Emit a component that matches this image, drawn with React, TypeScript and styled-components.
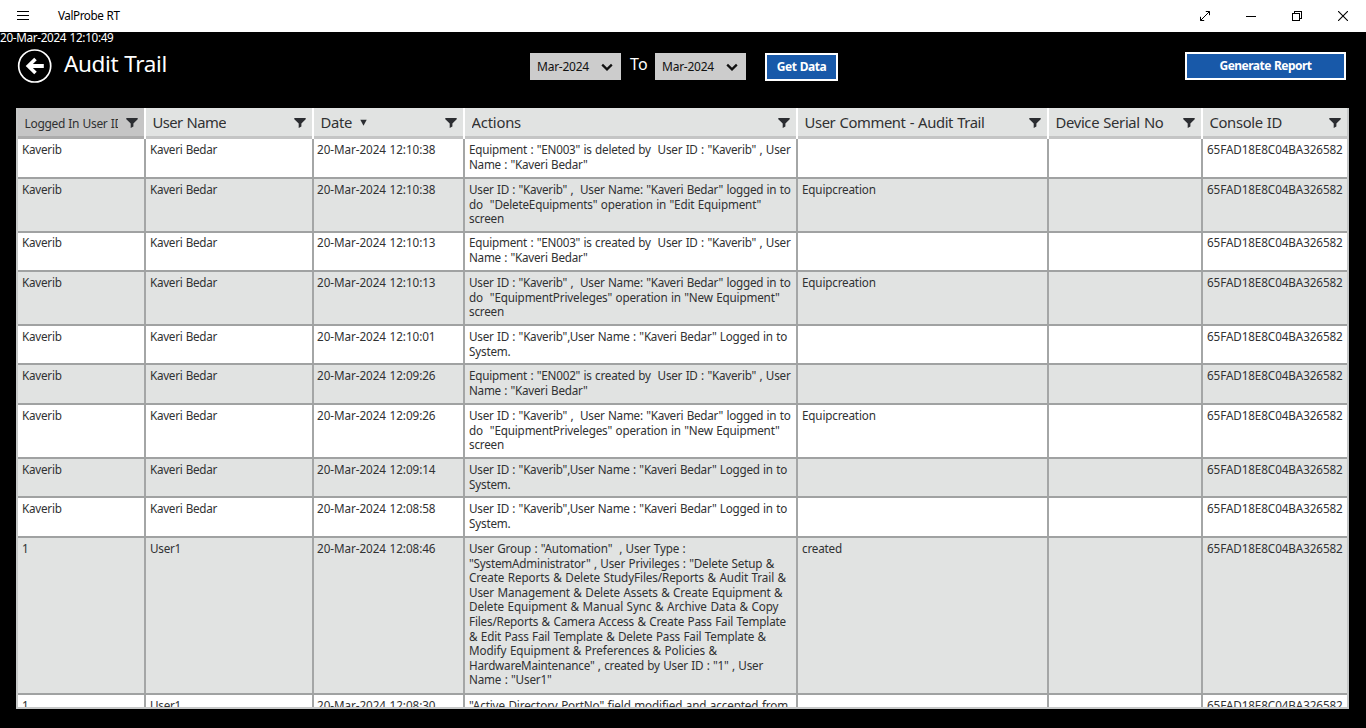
import React, { useLayoutEffect, useRef } from "react";
import styled, { createGlobalStyle } from "styled-components";

const Global = createGlobalStyle`
  * { box-sizing: border-box; }
  body { margin: 0; background: #000; font-family: "Noto Sans", "Open Sans", sans-serif; overflow: hidden; }
`;

/* A single line of text, tracked so that it fills a given advance width. */
const Line = styled.span`
  display: block;
  width: max-content;
  white-space: pre;
  word-spacing: 0.6px;
`;

function Fit({ text, width }: { text: string; width: number }) {
  const ref = useRef<HTMLSpanElement>(null);
  useLayoutEffect(() => {
    const el = ref.current!;
    el.style.letterSpacing = "0px";
    const natural = el.getBoundingClientRect().width;
    el.style.letterSpacing = `${(width - natural) / text.length}px`;
  }, [text, width]);
  return <Line ref={ref}>{text}</Line>;
}

const Page = styled.div`
  width: 1366px;
  height: 728px;
  display: flex;
  flex-direction: column;
  background: #000;
  color: #fff;
  overflow: hidden;
`;

const TitleBar = styled.header`
  height: 32px;
  flex: none;
  display: flex;
  align-items: center;
  background: #fff;
  color: #000;
  padding-left: 17px;
`;

const AppName = styled.div`
  flex: 1;
  margin-left: 29px;
  padding-bottom: 2px;
  font-size: 11.7px;
  line-height: 16px;
`;

const WindowButton = styled.button`
  width: 46px;
  height: 32px;
  border: 0;
  padding: 0;
  background: none;
  display: flex;
  align-items: center;
  justify-content: center;
`;

const Clock = styled.div`
  height: 14px;
  flex: none;
  font-size: 11.7px;
  line-height: 10px;
`;

const Toolbar = styled.div`
  height: 62px;
  flex: none;
  display: flex;
  align-items: flex-start;
  padding-right: 20px;
`;

const BackButton = styled.button`
  width: 36px;
  height: 36px;
  margin: 2px 0 0 17px;
  border: 0;
  padding: 0;
  background: none;
`;

const Heading = styled.h1`
  margin: 2px 0 0 11px;
  width: 466px;
  font-size: 22.5px;
  font-weight: 400;
  line-height: 32px;
`;

const MonthSelect = styled.div`
  width: 91px;
  height: 27px;
  margin-top: 7px;
  padding: 0 8px 0 7px;
  display: flex;
  align-items: center;
  justify-content: space-between;
  background: #ccc;
  color: #111;
  font-size: 12px;
`;

const ToLabel = styled.div`
  width: 34px;
  padding: 6px 0 0 9px;
  font-size: 16px;
  line-height: 24px;
`;

const ActionButton = styled.button<{ $w: number; $top: number; $left: string }>`
  width: ${(p) => p.$w}px;
  height: 28px;
  margin: ${(p) => p.$top}px 0 0 ${(p) => p.$left};
  padding: 0 0 1px;
  display: flex;
  align-items: center;
  justify-content: center;
  border: 2px solid #fff;
  background: #1859a9;
  color: #fff;
  font-family: inherit;
  font-size: 12px;
  font-weight: 700;
`;

const Grid = styled.div`
  width: 1333px;
  height: 601px;
  margin-left: 16px;
  border: 2px solid #c6c8c8;
  border-top: 0;
  overflow: hidden;
  background: #fff;
  color: #303132;
`;

const columns = "128px 168px 151px 333px 251px 154px 144px";

const HeadRow = styled.div`
  display: grid;
  grid-template-columns: ${columns};
  height: 31px;
  background: #e1e3e2;
`;

const HeadCell = styled.div<{ $active?: boolean }>`
  display: flex;
  align-items: center;
  justify-content: space-between;
  padding: 0 6.4px 2px 6.5px;
  border-right: 2px solid #fff;
  box-shadow: inset 0 -3px 0 ${(p) => (p.$active ? "#acacac" : "#c4c5c5")};
  background: ${(p) => (p.$active ? "#c5c5c5" : "#e1e3e2")};
  font-size: 14.8px;
  line-height: 22px;
  &:last-child { border-right: 0; }
`;

const HeadLabel = styled.div<{ $active?: boolean }>`
  display: flex;
  align-items: center;
  gap: 8px;
  overflow: hidden;
  ${(p) => (p.$active ? "width: 93px; font-size: 12px; padding-top: 2px;" : "padding-bottom: 2px;")}
`;

const Row = styled.div<{ $h: number; $alt: boolean }>`
  display: grid;
  grid-template-columns: ${columns};
  height: ${(p) => p.$h}px;
  border-bottom: 2px solid #a0a2a2;
  background: ${(p) => (p.$alt ? "#e1e3e2" : "#fff")};
`;

const Cell = styled.div<{ $tight?: boolean; $raised?: boolean }>`
  padding: ${(p) => (p.$raised ? 2 : 3)}px 0 0 ${(p) => (p.$tight ? 3 : 4)}px;
  border-right: 2px solid #a4a6a6;
  font-size: 11.7px;
  line-height: 14.6px;
  overflow: hidden;
  &:last-child { border-right: 0; }
`;

const FilterIcon = () => (
  <svg width="12" height="10" viewBox="0 0 12 10" fill="#2b2d31">
    <path d="M0.3 0H11.7V1.2L7.4 5.4V8.4L4.7 9.9V5.4L0.3 1.2Z" />
  </svg>
);

const SortIcon = () => (
  <svg width="7" height="7" viewBox="0 0 7 7" fill="#2b2d31" transform="translate(0 1)">
    <path d="M0.3 0.7H6.7L3.5 6.8Z" />
  </svg>
);

const ChevronIcon = () => (
  <svg width="12" height="8" viewBox="0 0 12 8" fill="none" stroke="#111" strokeWidth="2.3">
    <path d="M1.2 1.7L6 6.3L10.8 1.7" />
  </svg>
);

type Text = [string, number];

const heads: Text[] = [
  ["Logged In User ID", 98.5],
  ["User Name", 73.5],
  ["Date", 31.5],
  ["Actions", 49.5],
  ["User Comment - Audit Trail", 180],
  ["Device Serial No", 108],
  ["Console ID", 72.5],
];

const deleted: Text[] = [
  ['Equipment : "EN003" is deleted by  User ID : "Kaverib" , User', 321.5],
  ['Name : "Kaveri Bedar"', 118.5],
];
const created = (id: string): Text[] => [
  [`Equipment : "${id}" is created by  User ID : "Kaverib" , User`, 321.5],
  ['Name : "Kaveri Bedar"', 118.5],
];
const operation = (name: string, screen: string, width: number): Text[] => [
  ['User ID : "Kaverib" ,  User Name: "Kaveri Bedar" logged in to', 321.5],
  [`do  "${name}" operation in "${screen}"`, width],
  ["screen", 35],
];
const login: Text[] = [
  ['User ID : "Kaverib",User Name : "Kaveri Bedar" Logged in to', 318],
  ["System.", 41.5],
];
const newUser: Text[] = [
  ['User Group : "Automation"  , User Type :', 216.5],
  ['"SystemAdministrator" , User Privileges : "Delete Setup &', 305],
  ["Create Reports & Delete StudyFiles/Reports & Audit Trail &", 317],
  ["User Management & Delete Assets & Create Equipment &", 313.5],
  ["Delete Equipment & Manual Sync & Archive Data & Copy", 309.5],
  ["Files/Reports & Camera Access & Create Pass Fail Template", 317],
  ["& Edit Pass Fail Template & Delete Pass Fail Template &", 297],
  ["Modify Equipment & Preferences & Policies &", 248],
  ['HardwareMaintenance" , created by User ID : "1" , User', 294],
  ['Name : "User1"', 82.5],
];

interface Entry {
  h: number;
  id: Text;
  name: Text;
  time: string;
  actions: Text[];
  comment?: Text;
  raised?: boolean;
}

const kaverib: Text = ["Kaverib", 39.7];
const kaveri: Text = ["Kaveri Bedar", 67];
const equip: Text = ["Equipcreation", 73.7];

const entries: Entry[] = [
  { h: 40, id: kaverib, name: kaveri, time: "12:10:38", actions: deleted },
  { h: 54, id: kaverib, name: kaveri, time: "12:10:38", actions: operation("DeleteEquipments", "Edit Equipment", 292), comment: equip },
  { h: 39, id: kaverib, name: kaveri, time: "12:10:13", actions: created("EN003"), raised: true },
  { h: 54, id: kaverib, name: kaveri, time: "12:10:13", actions: operation("EquipmentPriveleges", "New Equipment", 310.5), comment: equip },
  { h: 39, id: kaverib, name: kaveri, time: "12:10:01", actions: login },
  { h: 40, id: kaverib, name: kaveri, time: "12:09:26", actions: created("EN002") },
  { h: 54, id: kaverib, name: kaveri, time: "12:09:26", actions: operation("EquipmentPriveleges", "New Equipment", 310.5), comment: equip },
  { h: 39, id: kaverib, name: kaveri, time: "12:09:14", actions: login },
  { h: 40, id: kaverib, name: kaveri, time: "12:08:58", actions: login },
  { h: 157, id: ["1", 6.5], name: ["User1", 31], time: "12:08:46", actions: newUser, comment: ["created", 40] },
  { h: 40, id: ["1", 6.5], name: ["User1", 31], time: "12:08:30", actions: [['"Active Directory PortNo" field modified and accepted from', 319]] },
];

export default function App() {
  return (
    <Page>
      <Global />
      <TitleBar>
        <svg width="12" height="10" viewBox="0 0 12 10" stroke="#000" shapeRendering="crispEdges">
          <path d="M0 0.5H12M0 4.5H12M0 8.5H12" />
        </svg>
        <AppName><Fit text="ValProbe RT" width={61.5} /></AppName>
        <WindowButton>
          <svg width="12" height="12" viewBox="0 0 12 12" fill="none" stroke="#000">
            <path d="M1.5 10.5L10.5 1.5M6.8 1.5H10.5V5.2M1.5 6.8V10.5H5.2" />
          </svg>
        </WindowButton>
        <WindowButton>
          <svg width="10" height="10" viewBox="0 0 10 10" stroke="#000" shapeRendering="crispEdges">
            <path d="M0 5.5H10" />
          </svg>
        </WindowButton>
        <WindowButton>
          <svg width="10" height="10" viewBox="0 0 10 10" fill="none" stroke="#000" shapeRendering="crispEdges">
            <path d="M0.5 2.5H7.5V9.5H0.5ZM2.5 2.5V0.5H9.5V7.5H7.5" />
          </svg>
        </WindowButton>
        <WindowButton>
          <svg width="10" height="10" viewBox="0 0 10 10" stroke="#000" strokeWidth="1.1">
            <path d="M0 0L10 10M10 0L0 10" />
          </svg>
        </WindowButton>
      </TitleBar>
      <Clock><Fit text="20-Mar-2024 12:10:49" width={113.5} /></Clock>
      <Toolbar>
        <BackButton>
          <svg width="36" height="36" viewBox="0 0 36 36" fill="none" stroke="#fff">
            <circle cx="17.7" cy="18" r="16" strokeWidth="1.7" />
            <path d="M11 18H26.8" strokeWidth="4" />
            <path d="M18.5 11L11.3 18L18.5 25" strokeWidth="3.6" />
          </svg>
        </BackButton>
        <Heading><Fit text="Audit Trail" width={103} /></Heading>
        <MonthSelect><Fit text="Mar-2024" width={52} /><ChevronIcon /></MonthSelect>
        <ToLabel><Fit text="To" width={18} /></ToLabel>
        <MonthSelect><Fit text="Mar-2024" width={52} /><ChevronIcon /></MonthSelect>
        <ActionButton $w={73} $top={7} $left="19px"><Fit text="Get Data" width={49.5} /></ActionButton>
        <ActionButton $w={161} $top={6} $left="auto"><Fit text="Generate Report" width={92} /></ActionButton>
      </Toolbar>
      <Grid>
        <HeadRow>
          {heads.map(([text, width], i) => (
            <HeadCell key={text} $active={i === 0}>
              <HeadLabel $active={i === 0}>
                <Fit text={text} width={width} />
                {text === "Date" && <SortIcon />}
              </HeadLabel>
              <FilterIcon />
            </HeadCell>
          ))}
        </HeadRow>
        {entries.map((e, i) => (
          <Row key={i} $h={e.h} $alt={i % 2 === 1}>
            <Cell $raised={e.raised}><Fit text={e.id[0]} width={e.id[1]} /></Cell>
            <Cell $raised={e.raised}><Fit text={e.name[0]} width={e.name[1]} /></Cell>
            <Cell $raised={e.raised} $tight><Fit text={`20-Mar-2024 ${e.time}`} width={118.5} /></Cell>
            <Cell $raised={e.raised}>
              {e.actions.map(([text, width]) => <Fit key={text} text={text} width={width} />)}
            </Cell>
            <Cell $raised={e.raised}>{e.comment && <Fit text={e.comment[0]} width={e.comment[1]} />}</Cell>
            <Cell />
            <Cell $raised={e.raised}><Fit text="65FAD18E8C04BA326582" width={135.7} /></Cell>
          </Row>
        ))}
      </Grid>
    </Page>
  );
}
